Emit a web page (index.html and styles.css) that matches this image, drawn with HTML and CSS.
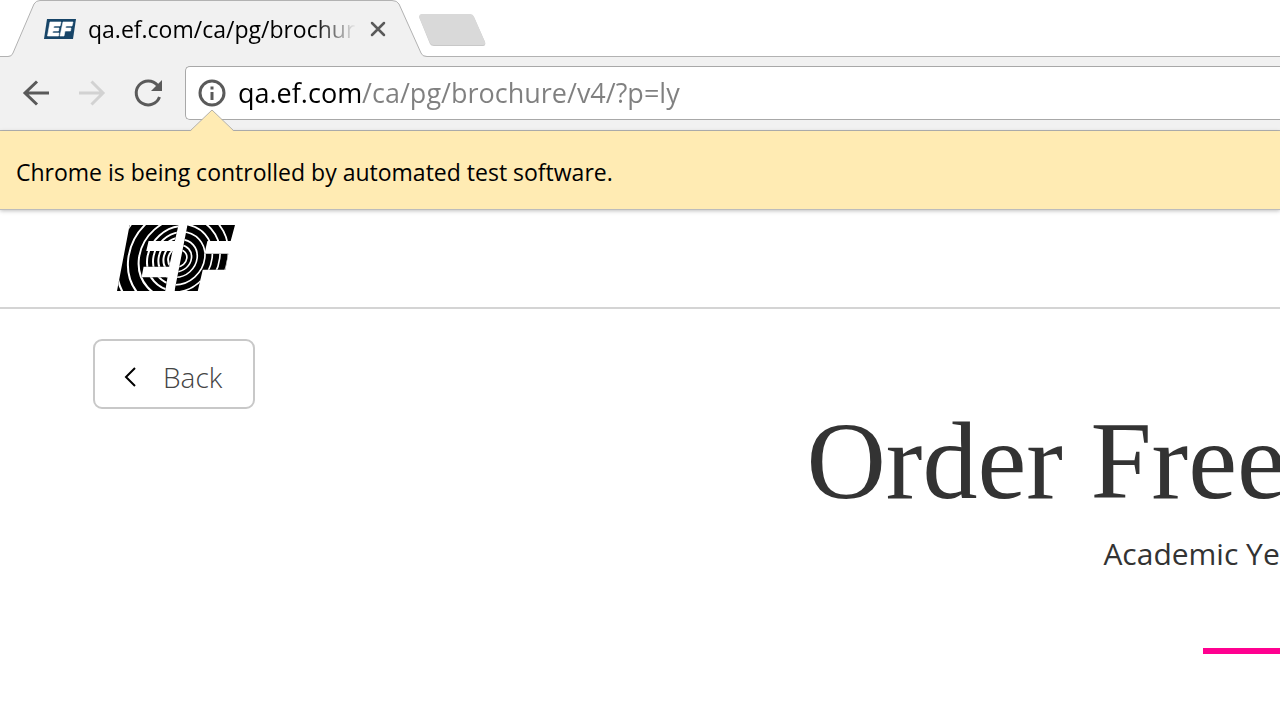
FILE: index.html
```html
<!DOCTYPE html>
<html lang="en">
<head>
<meta charset="utf-8">
<meta name="viewport" content="width=device-width, initial-scale=1">
<title>qa.ef.com/ca/pg/brochure</title>
<link rel="stylesheet" href="styles.css">
</head>
<body>
<div class="browser">
  <div class="tab-strip">
    <div class="tab">
      <svg class="tab-shape" viewBox="0 0 436 57" aria-hidden="true"><path d="M0 57V56.500H8Q12 56.500 13 53L34 4Q36 .5 40 .5H392Q397 .5 399 4L421 53Q422 56.500 427 56.500H436V57Z" fill="#f1f1f1"/><path d="M0 56.500H8Q12 56.500 13 53L34 4Q36 .5 40 .5H392Q397 .5 399 4L421 53Q422 56.500 427 56.500H436" fill="none" stroke="#b2b2b2"/></svg>
      <svg class="favicon" viewBox="0 0 32 20" aria-hidden="true"><path d="M3 0H32L29 20H0Z" fill="#174568"/><path d="M6 3H17L16 7H10L9.500 9H15L14.500 12H9L8.500 14H15L14.500 17H3.500ZM19 3H29L28 7H22L21.500 9H27L26.500 12H21L20 17H16Z" fill="#fff" stroke="#fff" stroke-width=".6"/></svg>
      <span class="tab-title">qa.ef.com/ca/pg/brochur</span>
      <button class="icon-button tab-close" aria-label="Close tab"><svg width="16" height="16" viewBox="0 0 16 16"><path d="M2 2L14 14M14 2L2 14" fill="none" stroke="#5a5a5a" stroke-width="2.500" stroke-linecap="round"/></svg></button>
    </div>
    <button class="icon-button new-tab" aria-label="New tab"><svg width="70" height="36" viewBox="0 0 70 36"><path d="M4 1.500H52Q55 1.500 56 4L67 29Q68 33 65 33H16Q13 33 12 31L1.500 5Q.5 2 4 1.500Z" fill="#c8c8c8"/><path d="M4 1H52Q55 1 56 4L67 29Q68 32 65 32H16Q13 32 12 30L1.500 5Q.5 1 4 1Z" fill="#d9d9d9"/></svg></button>
  </div>
  <div class="toolbar">
    <button class="icon-button nav" aria-label="Back"><svg width="32" height="32" viewBox="0 0 32 32"><path d="M29 16H5M17 4.500L5 16L17 27.500" fill="none" stroke="#5a5a5a" stroke-width="3"/></svg></button>
    <button class="icon-button nav" aria-label="Forward" disabled><svg width="32" height="32" viewBox="0 0 32 32"><path d="M3 16H27M15.500 4.500L27 16L15.500 27.500" fill="none" stroke="#d2d2d2" stroke-width="3"/></svg></button>
    <button class="icon-button nav" aria-label="Reload"><svg width="32" height="32" viewBox="0 0 32 32"><path d="M27.500 20A12 12 0 1 1 25.500 8.300" fill="none" stroke="#5a5a5a" stroke-width="3"/><path d="M30 3V14H19Z" fill="#5a5a5a"/></svg></button>
    <div class="address">
      <button class="icon-button info" aria-label="View site information"><svg width="28" height="28" viewBox="0 0 28 28"><circle cx="14" cy="14" r="12" fill="none" stroke="#5a5a5a" stroke-width="3"/><path d="M12.500 7.500H15.500V10.500H12.500ZM12.500 13H15.500V21H12.500Z" fill="#5a5a5a"/></svg></button>
      <input class="url" type="text" aria-label="Address" value="qa.ef.com/ca/pg/brochure/v4/?p=ly" spellcheck="false">
    </div>
  </div>
  <div class="infobar">
    <svg class="infobar-arrow" width="44" height="22" viewBox="0 0 44 22" aria-hidden="true"><path d="M0 22V21L1 20.500L22 0L43 20.500L44 21V22Z" fill="#ffebb3"/><path d="M0 21L22 0L44 21" fill="none" stroke="#b5b1a8"/></svg>
    Chrome is being controlled by automated test software.
  </div>
</div>
<header class="site-header">
  <a class="logo" href="#" aria-label="EF home">
    <svg viewBox="50 30 355 198" width="118" height="66">
      <defs>
        <clipPath id="e"><path d="M88 30H235L224 78H145L138 108H217L207 155H130L124 187H202L195 228H50Z"/></clipPath>
        <clipPath id="f"><path d="M262 30H405L392 78H322L313 116H385L376 164H308L293 228H223Z"/></clipPath>
      </defs>
      <g clip-path="url(#e)"><path d="M50 30H405V228H50Z"/>
        <g transform="translate(238 130) skewX(-7)" fill="none" stroke="#fff" stroke-width="6"><circle r="34"/><circle r="48"/><circle r="63"/><circle r="79"/><circle r="97"/><circle r="122"/><circle r="154"/><circle r="188"/></g>
      </g>
      <g clip-path="url(#f)"><path d="M50 30H405V228H50Z"/>
        <g transform="translate(234 130) skewX(-7)" fill="none" stroke="#fff" stroke-width="5"><circle r="26"/><circle r="40"/><circle r="57"/><circle r="80"/><circle r="102"/><circle r="125"/><circle r="150"/></g>
      </g>
    </svg>
  </a>
</header>
<main class="page">
  <button class="back"><svg width="12" height="20" viewBox="0 0 12 20" aria-hidden="true"><path d="M11 1L2 10L11 19" fill="none" stroke="#000" stroke-width="2"/></svg>Back</button>
  <section class="hero">
    <h1>Order Free</h1>
    <p>Academic Ye</p>
    <hr>
  </section>
</main>
</body>
</html>
```
FILE: styles.css
```css
* { box-sizing: border-box; }
body {
  margin: 0;
  background: #fff;
  color: #333;
  font-family: "Open Sans", "Noto Sans", sans-serif;
  overflow-x: hidden;
}
.icon-button {
  display: flex;
  align-items: center;
  justify-content: center;
  flex: none;
  padding: 0;
  border: 0;
  background: none;
}
.tab-strip {
  display: flex;
  height: 57px;
  background: linear-gradient(#b2b2b2, #b2b2b2) bottom / 100% 1px no-repeat;
}
.tab {
  position: relative;
  z-index: 0;
  display: flex;
  align-items: center;
  width: 418px;
  padding-left: 44px;
}
.tab-shape {
  position: absolute;
  top: 0;
  left: 0;
  width: 436px;
  height: 57px;
  z-index: -1;
}
.favicon { width: 32px; height: 20px; flex: none; }
.tab-title {
  width: 270px;
  margin-left: 12px;
  white-space: nowrap;
  color: #000;
  font-size: 23px;
  line-height: 36px;
  -webkit-mask-image: linear-gradient(90deg, #000 226px, transparent 268px);
  mask-image: linear-gradient(90deg, #000 226px, transparent 268px);
}
.tab-close { width: 24px; height: 24px; margin-left: 8px; }
.new-tab { height: 36px; margin-top: 13px; z-index: 1; }
.toolbar {
  display: flex;
  align-items: center;
  gap: 24px;
  height: 74px;
  padding: 0 0 2px 20px;
  background: #f1f1f1;
  border-bottom: 1px solid #b5b5b5;
}
.nav { width: 32px; height: 32px; }
.address {
  display: flex;
  align-items: center;
  flex: 1;
  gap: 12px;
  height: 54px;
  margin-left: -3px;
  padding-left: 12px;
  background: #fff;
  border: 1px solid #a8a8a8;
  border-right: 0;
  border-radius: 5px 0 0 5px;
}
.url {
  flex: 1;
  min-width: 0;
  padding: 0;
  border: 0;
  outline: 0;
  font: 27px/40px "Open Sans", "Noto Sans", sans-serif;
  color: #808080;
  background: linear-gradient(90deg, #000 124px, #808080 124px);
  -webkit-background-clip: text;
  background-clip: text;
  -webkit-text-fill-color: transparent;
}
.infobar {
  position: relative;
  padding: 23px 16px 19px;
  background: #ffebb3;
  border-bottom: 1px solid #bcbcbc;
  box-shadow: 0 1px 4px rgba(0, 0, 0, .25);
  color: #000;
  font-size: 23px;
  line-height: 36px;
}
.infobar-arrow { position: absolute; top: -21px; left: 190px; }
.site-header {
  display: flex;
  padding: 15px 117px 16px;
  border-bottom: 2px solid #d4d4d4;
}
.logo { display: flex; }
.page { padding-top: 30px; }
.back {
  display: flex;
  align-items: center;
  gap: 27px;
  height: 70px;
  margin-left: 93px;
  padding: 6px 31px 0 29px;
  background: #fff;
  border: 2px solid #c8c8c8;
  border-radius: 9px;
  color: #444;
  font: 300 28px/34px "Open Sans", sans-serif;
}
.hero {
  display: grid;
  justify-items: start;
  width: max-content;
  margin-left: 63vw;
  white-space: nowrap;
}
.hero h1 {
  margin: 0;
  font: 400 110px/104px "Liberation Serif", serif;
}
.hero p {
  margin: 20px 0 0 297px;
  font-size: 30px;
  line-height: 42px;
}
.hero hr {
  width: 120px;
  height: 6px;
  margin: 73px 0 0 397px;
  border: 0;
  background: #ff0090;
}
```
